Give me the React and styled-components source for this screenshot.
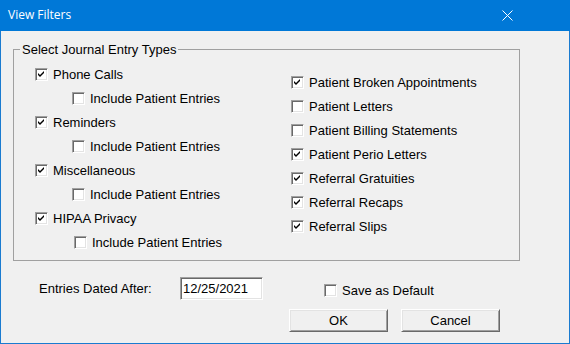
import React, { useState } from 'react';
import styled, { createGlobalStyle } from 'styled-components';

const GlobalStyle = createGlobalStyle`
  html, body {
    margin: 0;
    padding: 0;
    background: #f0f0f0;
  }
  body {
    font-family: "Liberation Sans", Arial, sans-serif;
    font-size: 13px;
    color: #000;
  }
`;

const leftItems = [
  { label: 'Phone Calls', checked: true },
  { label: 'Include Patient Entries', checked: false, indent: 37 },
  { label: 'Reminders', checked: true },
  { label: 'Include Patient Entries', checked: false, indent: 37 },
  { label: 'Miscellaneous', checked: true },
  { label: 'Include Patient Entries', checked: false, indent: 37 },
  { label: 'HIPAA Privacy', checked: true },
  { label: 'Include Patient Entries', checked: false, indent: 39 },
];

const rightItems = [
  { label: 'Patient Broken Appointments', checked: true },
  { label: 'Patient Letters', checked: false },
  { label: 'Patient Billing Statements', checked: false },
  { label: 'Patient Perio Letters', checked: true },
  { label: 'Referral Gratuities', checked: true },
  { label: 'Referral Recaps', checked: true },
  { label: 'Referral Slips', checked: true },
];

const CheckBox = ({ label, checked, indent }) => {
  const [on, setOn] = useState(checked);
  return (
    <CheckRow indent={indent} onClick={() => setOn(!on)}>
      <Box>
        {on && (
          <svg width="11" height="11" viewBox="0 0 11 11">
            <path d="M2 4 L4 6 L8 2 L8 4 L4 8 L2 6 Z" fill="#000" />
          </svg>
        )}
      </Box>
      <span>{label}</span>
    </CheckRow>
  );
};

const App = () => (
  <>
    <GlobalStyle />
    <Window>
      <TitleBar>
        <Title>View Filters</Title>
        <CloseButton>
          <svg width="11" height="11" viewBox="0 0 11 11">
            <path d="M0.5 0.5 L10.5 10.5 M10.5 0.5 L0.5 10.5" stroke="#fff" strokeWidth="1" />
          </svg>
        </CloseButton>
      </TitleBar>
      <Body>
        <Group>
          <Legend>Select Journal Entry Types</Legend>
          <Columns>
            <Column top={5}>
              {leftItems.map((item, i) => (
                <CheckBox key={i} {...item} />
              ))}
            </Column>
            <Column top={13}>
              {rightItems.map((item, i) => (
                <CheckBox key={i} {...item} />
              ))}
            </Column>
          </Columns>
        </Group>
        <DateRow>
          <span>Entries Dated After:</span>
          <DateInput defaultValue="12/25/2021" />
          <span />
          <SaveWrap>
            <CheckBox label="Save as Default" checked={false} />
          </SaveWrap>
        </DateRow>
        <ButtonRow>
          <Button>OK</Button>
          <Button>Cancel</Button>
        </ButtonRow>
      </Body>
    </Window>
  </>
);

export default App;

const Window = styled.div`
  width: 570px;
  height: 344px;
  display: flex;
  flex-direction: column;
  background: #f0f0f0;
`;

const TitleBar = styled.div`
  height: 31px;
  flex: none;
  display: flex;
  align-items: center;
  justify-content: space-between;
  background: #0078d7;
  color: #fff;
  padding-left: 8px;
  box-sizing: border-box;
`;

const Title = styled.span`
  font-family: "Segoe UI", "Open Sans", "Noto Sans", sans-serif;
  font-size: 12px;
  line-height: 16px;
  margin-top: -1px;
`;

const CloseButton = styled.span`
  width: 46px;
  height: 31px;
  margin-right: 40px;
  display: flex;
  align-items: center;
  justify-content: center;
`;

const Body = styled.div`
  flex: 1;
  border: 1px solid #1a7bd0;
  border-top: none;
  padding: 11px 0 0 12px;
`;

const Group = styled.fieldset`
  width: 507px;
  height: 219px;
  box-sizing: border-box;
  margin: 0;
  padding: 0;
  border: 1px solid #a0a0a0;
  min-inline-size: 0;
`;

const Legend = styled.legend`
  margin-left: 6px;
  padding: 0 2px;
  line-height: 15px;
  font-size: 13px;
`;

const Columns = styled.div`
  display: grid;
  grid-template-columns: 256px 1fr;
  padding-left: 21px;
`;

const Column = styled.div`
  display: flex;
  flex-direction: column;
  padding-top: ${({ top }) => top}px;
`;

const CheckRow = styled.label`
  height: 24px;
  display: flex;
  align-items: center;
  gap: 5px;
  padding-left: ${({ indent }) => indent || 0}px;
  white-space: nowrap;
  cursor: default;
`;

const Box = styled.span`
  width: 13px;
  height: 13px;
  box-sizing: border-box;
  flex: none;
  background: #fff;
  border: 1px solid;
  border-color: #a0a0a0 #fff #fff #a0a0a0;
  box-shadow: inset 1px 1px 0 #696969, inset -1px -1px 0 #e3e3e3;
  display: flex;
  align-items: center;
  justify-content: center;
`;

const DateRow = styled.div`
  display: grid;
  grid-template-columns: 141px 83px 61px auto;
  grid-template-rows: 23px;
  align-items: center;
  margin: 16px 0 0 26px;
`;

const DateInput = styled.input`
  width: 83px;
  height: 23px;
  box-sizing: border-box;
  margin: 0;
  padding: 0 2px;
  font-family: "Liberation Sans", Arial, sans-serif;
  font-size: 13px;
  background: #fff;
  border: 1px solid;
  border-color: #a0a0a0 #fff #fff #a0a0a0;
  box-shadow: inset 1px 1px 0 #696969, inset -1px -1px 0 #e3e3e3;
  outline: none;
`;

const SaveWrap = styled.div`
  margin-top: 3px;
`;

const ButtonRow = styled.div`
  display: flex;
  gap: 13px;
  margin: 9px 0 0 276px;
`;

const Button = styled.button`
  width: 99px;
  height: 23px;
  box-sizing: border-box;
  margin: 0;
  padding: 0;
  font-family: "Liberation Sans", Arial, sans-serif;
  font-size: 13px;
  color: #000;
  background: #f0f0f0;
  border: 1px solid;
  border-color: #fff #696969 #696969 #fff;
  box-shadow: inset 1px 1px 0 #e3e3e3, inset -1px -1px 0 #a0a0a0;
`;
